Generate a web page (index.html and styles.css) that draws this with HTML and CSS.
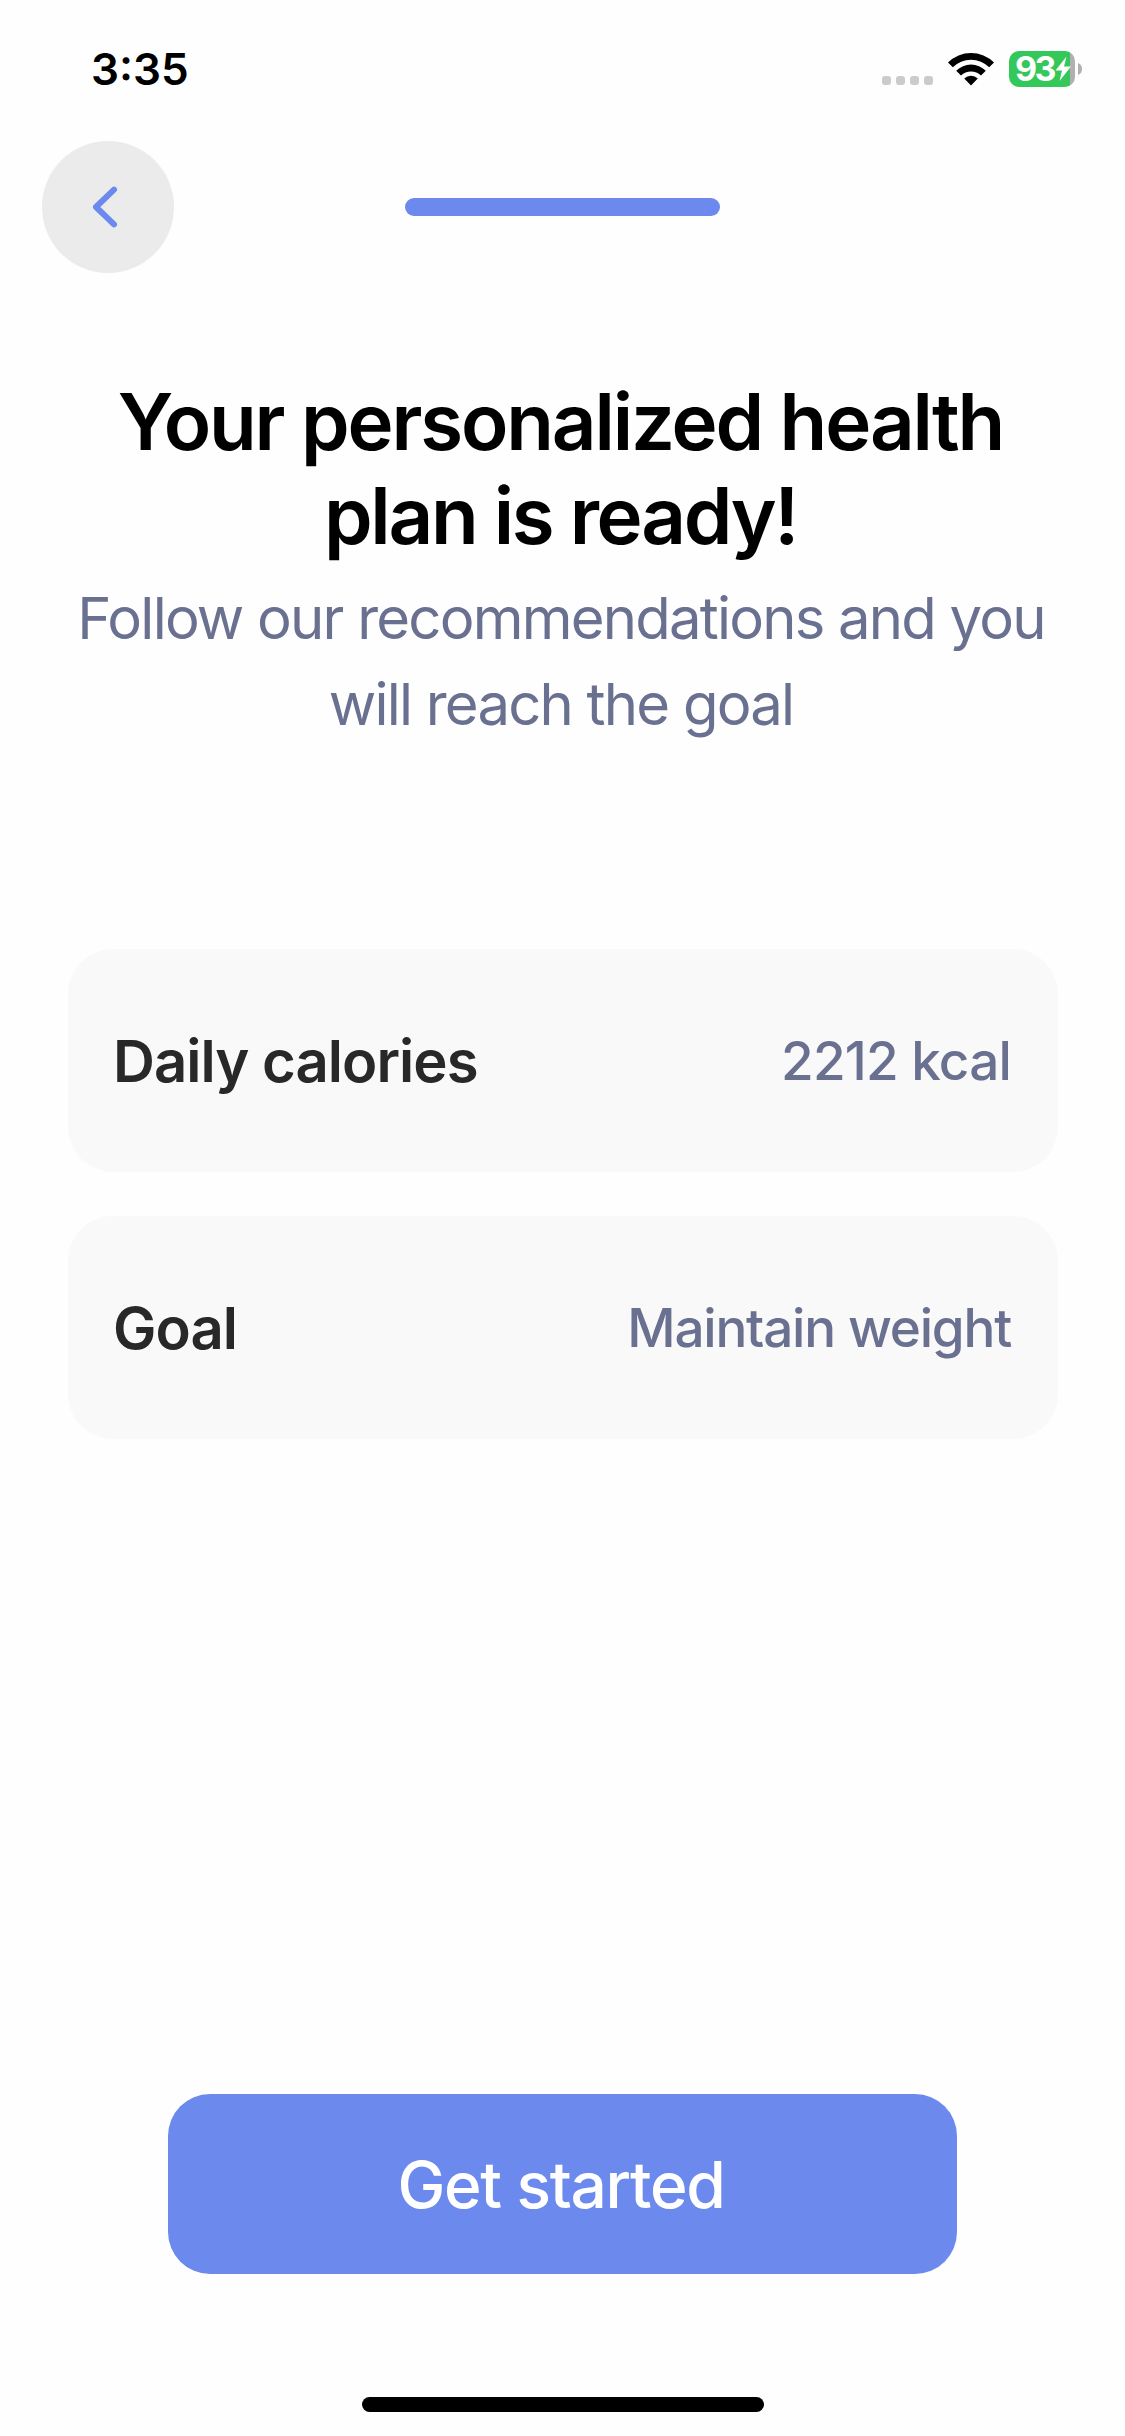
FILE: index.html
```html
<!DOCTYPE html>
<html lang="en">
<head>
  <meta charset="utf-8">
  <meta name="viewport" content="width=device-width">
  <title>Your health plan</title>
  <link rel="stylesheet" href="styles.css">
</head>
<body>
  <div class="screen">
    <header class="status">
      <span class="status-time">3:35</span>
      <div class="status-icons">
        <div class="cellular"><i></i><i></i><i></i><i></i></div>
        <svg class="wifi" viewBox="0 0 46 34" width="46" height="34" aria-hidden="true">
          <path d="M0 10.5 A32.5 32.5 0 0 1 46 10.5 L41.2 15.3 A25.7 25.7 0 0 0 4.8 15.3 Z"/>
          <path d="M8.2 18.700 A20.900 20.900 0 0 1 37.800 18.700 L33 23.500 A14.200 14.200 0 0 0 13 23.500 Z"/>
          <path d="M16.200 26.500 A9.800 9.800 0 0 1 29.800 26.500 L23 33.400 Z"/>
        </svg>
        <div class="battery">
          <div class="battery-body">
            <span class="battery-level">93</span>
            <svg class="bolt" viewBox="0 0 16 26" width="16" height="26" aria-hidden="true">
              <path d="M11.500 0.500 L0.500 14.500 H7 L4.500 25 L16 10.500 H9 Z"/>
            </svg>
          </div>
          <svg class="battery-cap" viewBox="0 0 4 12" width="4" height="12" aria-hidden="true"><path d="M0 0 Q4 1.500 4 6 T0 12 Z"/></svg>
        </div>
      </div>
    </header>

    <nav class="topbar">
      <button class="back" aria-label="Back">
        <svg viewBox="0 0 132 132" width="132" height="132" aria-hidden="true">
          <path d="M72 48.700 L54 66 L72 83.300"/>
        </svg>
      </button>
      <div class="progress"></div>
    </nav>

    <main class="content">
      <h1 class="title"><span class="title-first">Your personalized health</span><br><span class="title-second">plan is ready!</span></h1>
      <p class="subtitle">Follow our recommendations and you<br>will reach the goal</p>
      <div class="cards">
        <div class="card"><span class="label">Daily calories</span><span class="value">2212 kcal</span></div>
        <div class="card"><span class="label">Goal</span><span class="value value-goal">Maintain weight</span></div>
      </div>
    </main>

    <footer class="footer">
      <button class="cta">Get started</button>
      <div class="home-indicator"></div>
    </footer>
  </div>
</body>
</html>
```
FILE: styles.css
```css
* { box-sizing: border-box; margin: 0; padding: 0; }

body {
  background: #fefefe;
  font-family: Inter, "Liberation Sans", sans-serif;
  color: #000;
}

button { border: 0; font: inherit; }
svg { display: block; }

.screen {
  width: 1125px;
  height: 2436px;
  display: flex;
  flex-direction: column;
  overflow: hidden;
}

/* Status bar */
.status {
  height: 141px;
  padding: 0 43px 0 91px;
  display: flex;
  justify-content: space-between;
}
.status-time {
  padding-top: 42px;
  font-size: 44px;
  line-height: 54px;
  font-weight: 600;
}
.status-icons { display: flex; padding-top: 51px; height: 87px; }
.cellular { display: flex; gap: 5px; padding-top: 25px; margin-right: 15px; }
.cellular i { width: 9px; height: 9px; border-radius: 3px; background: #cbcbcb; }
.wifi { margin: 1px 15px 0 0; }
.battery { display: flex; align-items: center; gap: 3px; }
.battery-body {
  width: 66px;
  height: 36px;
  padding-left: 6px;
  border-radius: 10px;
  background: linear-gradient(90deg, #34c759 61px, #b0b0b0 61px);
  display: flex;
  align-items: center;
}
.battery-level {
  width: 40px;
  color: #fff;
  font-size: 34px;
  line-height: 36px;
  font-weight: 700;
  letter-spacing: -2.5px;
}
.bolt { fill: #fff; }
.battery-cap { fill: #b0b0b0; }

/* Navigation */
.topbar {
  height: 132px;
  padding: 0 42px;
  display: grid;
  grid-template-columns: 132px 1fr 132px;
  align-items: center;
}
.back { width: 132px; height: 132px; border-radius: 50%; background: #ebebeb; }
.back path {
  fill: none;
  stroke: #6c8aee;
  stroke-width: 6;
  stroke-linecap: round;
  stroke-linejoin: round;
}
.progress { width: 315px; height: 18px; border-radius: 9px; background: #6c8aee; justify-self: center; }

/* Heading */
.content { display: flex; flex-direction: column; padding: 102px 67px 0 68px; text-align: center; }
.title { padding-right: 5px; font-size: 78px; line-height: 94px; font-weight: 600; white-space: nowrap; }
.title-first { letter-spacing: -2.15px; }
.title-second { letter-spacing: -2.3px; }
.subtitle {
  margin-top: 12px;
  padding-right: 4px;
  font-size: 58px;
  line-height: 86px;
  letter-spacing: -1.78px;
  color: #6a7090;
  white-space: nowrap;
}

/* Plan summary */
.cards { margin-top: 202px; display: flex; flex-direction: column; gap: 44px; }
.card {
  height: 223px;
  padding: 0 47px 0 45px;
  border-radius: 45px;
  background: #f9f9f9;
  display: flex;
  align-items: center;
  justify-content: space-between;
}
.label { font-size: 58px; font-weight: 600; letter-spacing: -0.95px; color: #282828; }
.value { font-size: 53px; font-weight: 500; letter-spacing: -0.8px; color: #6a7090; }
.value-goal { letter-spacing: -1.2px; }

/* Footer */
.footer { margin-top: auto; padding-bottom: 24px; display: flex; flex-direction: column; align-items: center; gap: 123px; }
.cta {
  width: 789px;
  height: 180px;
  padding-right: 3px;
  border-radius: 42px;
  background: #6c8aee;
  color: #fff;
  font-size: 64px;
  font-weight: 500;
  letter-spacing: -1.3px;
}
.home-indicator { width: 402px; height: 15px; border-radius: 8px; background: #000; }
```
